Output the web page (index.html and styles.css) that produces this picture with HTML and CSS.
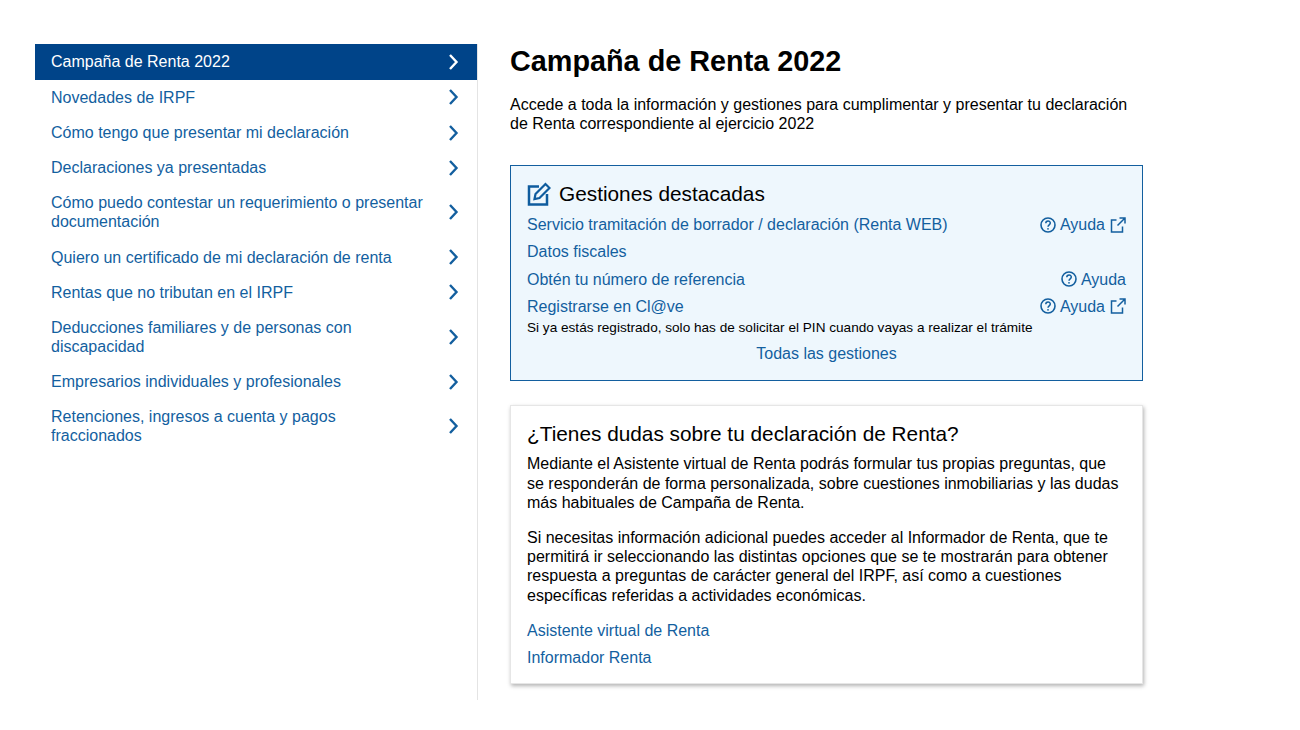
FILE: index.html
```html
<!DOCTYPE html>
<html>
	<head>
		<meta charset="utf-8">
		<link rel="stylesheet" href="styles.css">
		<title>Campaña de Renta 2022</title>
	</head>
	<body>
		<svg class="defs" width="0" height="0">
			<symbol id="chevron" viewBox="0 0 12 18"><path d="M3 2l6.500 7-6.500 7" fill="none" stroke="currentColor" stroke-width="2.400"/></symbol>
			<symbol id="help" viewBox="0 0 16 16"><circle cx="8" cy="8" r="7" fill="none" stroke="currentColor" stroke-width="1.600"/><path d="M5.800 6.300c0-3 4.500-3 4.500-.2 0 1.800-2.300 1.700-2.300 3.600" fill="none" stroke="currentColor" stroke-width="1.500"/><circle cx="8" cy="11.800" r=".9" fill="currentColor"/></symbol>
			<symbol id="external" viewBox="0 0 16 16"><path d="M6.500 3H1.500v12h11V9.500M9.500 1H15v5.500M15 1L7.500 8.500" fill="none" stroke="currentColor" stroke-width="1.500"/></symbol>
		</svg>
		<div class="wrapper">
			<!-- left menu -->
			<div class="sidebar">
				<a class="menuItem active" href="#"><span>Campaña de Renta 2022</span><svg class="chevron"><use href="#chevron"/></svg></a>
				<a class="menuItem" href="#"><span>Novedades de IRPF</span><svg class="chevron"><use href="#chevron"/></svg></a>
				<a class="menuItem" href="#"><span>Cómo tengo que presentar mi declaración</span><svg class="chevron"><use href="#chevron"/></svg></a>
				<a class="menuItem" href="#"><span>Declaraciones ya presentadas</span><svg class="chevron"><use href="#chevron"/></svg></a>
				<a class="menuItem" href="#"><span>Cómo puedo contestar un requerimiento o presentar documentación</span><svg class="chevron"><use href="#chevron"/></svg></a>
				<a class="menuItem" href="#"><span>Quiero un certificado de mi declaración de renta</span><svg class="chevron"><use href="#chevron"/></svg></a>
				<a class="menuItem" href="#"><span>Rentas que no tributan en el IRPF</span><svg class="chevron"><use href="#chevron"/></svg></a>
				<a class="menuItem" href="#"><span>Deducciones familiares y de personas con discapacidad</span><svg class="chevron"><use href="#chevron"/></svg></a>
				<a class="menuItem" href="#"><span>Empresarios individuales y profesionales</span><svg class="chevron"><use href="#chevron"/></svg></a>
				<a class="menuItem" href="#"><span>Retenciones, ingresos a cuenta y pagos fraccionados</span><svg class="chevron"><use href="#chevron"/></svg></a>
			</div>
			<!-- main column -->
			<div class="content">
				<h1>Campaña de Renta 2022</h1>
				<p class="intro">Accede a toda la información y gestiones para cumplimentar y presentar tu declaración de Renta correspondiente al ejercicio 2022</p>
				<div class="gestiones">
					<h2>
						<svg class="editIcon" viewBox="0 0 24 24"><path d="M12 4.500H2v18h18V12" fill="none" stroke="currentColor" stroke-width="2.500"/><path d="M7.500 17l1-5L18.500 2l4 4-10 10z" fill="none" stroke="currentColor" stroke-width="2.200"/></svg>
						Gestiones destacadas
					</h2>
					<div class="row">
						<a href="#">Servicio tramitación de borrador / declaración (Renta WEB)</a>
						<a class="ayuda" href="#"><svg class="smallIcon"><use href="#help"/></svg>Ayuda<svg class="smallIcon extIcon"><use href="#external"/></svg></a>
					</div>
					<div class="row"><a href="#">Datos fiscales</a></div>
					<div class="row">
						<a href="#">Obtén tu número de referencia</a>
						<a class="ayuda" href="#"><svg class="smallIcon"><use href="#help"/></svg>Ayuda</a>
					</div>
					<div class="row">
						<a href="#">Registrarse en Cl@ve</a>
						<a class="ayuda" href="#"><svg class="smallIcon"><use href="#help"/></svg>Ayuda<svg class="smallIcon extIcon"><use href="#external"/></svg></a>
					</div>
					<div class="note">Si ya estás registrado, solo has de solicitar el PIN cuando vayas a realizar el trámite</div>
					<a class="todas" href="#">Todas las gestiones</a>
				</div>
				<div class="dudas">
					<h3>¿Tienes dudas sobre tu declaración de Renta?</h3>
					<p>Mediante el Asistente virtual de Renta podrás formular tus propias preguntas, que se responderán de forma personalizada, sobre cuestiones inmobiliarias y las dudas más habituales de Campaña de Renta.</p>
					<p>Si necesitas información adicional puedes acceder al Informador de Renta, que te permitirá ir seleccionando las distintas opciones que se te mostrarán para obtener respuesta a preguntas de carácter general del IRPF, así como a cuestiones específicas referidas a actividades económicas.</p>
					<a class="dudasLink" href="#">Asistente virtual de Renta</a>
					<a class="dudasLink" href="#">Informador Renta</a>
				</div>
			</div>
		</div>
	</body>
</html>
```

FILE: styles.css
```css
body {
	margin: 0;
	background: #fff;
	color: #000;
	font-family: "Liberation Sans", Arial, sans-serif;
	font-size: 16px;
	line-height: 19.2px;
}
a {
	color: #135f9f;
	text-decoration: none;
}
.defs {
	position: absolute;
}
.wrapper {
	display: flex;
	align-items: flex-start;
	padding: 44px 0 0 35px;
}
.sidebar {
	width: 442px;
	height: 656px;
	border-right: 1px solid #e4e4e4;
}
.menuItem {
	display: flex;
	align-items: center;
	justify-content: space-between;
	padding: 7.965px 18px 7.965px 16px;
}
.menuItem span {
	width: 378px;
}
.menuItem.active {
	background: #004489;
	color: #fff;
	padding-top: 8.360px;
	padding-bottom: 8.360px;
}
.chevron {
	width: 12px;
	height: 18px;
}
.content {
	width: 633px;
	margin-left: 32px;
}
h1 {
	margin: 0;
	font-size: 28.800px;
	line-height: 35px;
}
.intro {
	margin: 16px 0 32px;
}
.gestiones {
	border: 1px solid #135f9f;
	background: #eef7fd;
	padding: 16px;
	height: 216px;
	box-sizing: border-box;
}
h2 {
	display: flex;
	align-items: center;
	gap: 8px;
	margin: 0 0 8.800px;
	font-size: 20.800px;
	font-weight: normal;
	line-height: 24px;
}
.editIcon {
	width: 24px;
	height: 24px;
	color: #0f5c9e;
}
.row {
	display: flex;
	justify-content: space-between;
	margin-bottom: 8px;
}
.ayuda {
	display: flex;
	align-items: center;
	gap: 4px;
}
.smallIcon {
	width: 16px;
	height: 16px;
}
.extIcon {
	margin-left: 1px;
}
.note {
	margin-top: -4px;
	font-size: 13.600px;
	line-height: 16.320px;
}
.todas {
	display: block;
	margin-top: 8px;
	text-align: center;
}
.dudas {
	margin-top: 24px;
	padding: 16px;
	height: 279px;
	box-sizing: border-box;
	border: 1px solid #e6e6e6;
	box-shadow: 1px 2px 4px rgba(0, 0, 0, 0.3);
}
h3 {
	margin: 0 0 8px;
	font-size: 20.800px;
	font-weight: normal;
	line-height: 24px;
}
.dudas p {
	margin: 0 0 16px;
}
.dudasLink {
	display: block;
	margin-bottom: 8px;
}
```
